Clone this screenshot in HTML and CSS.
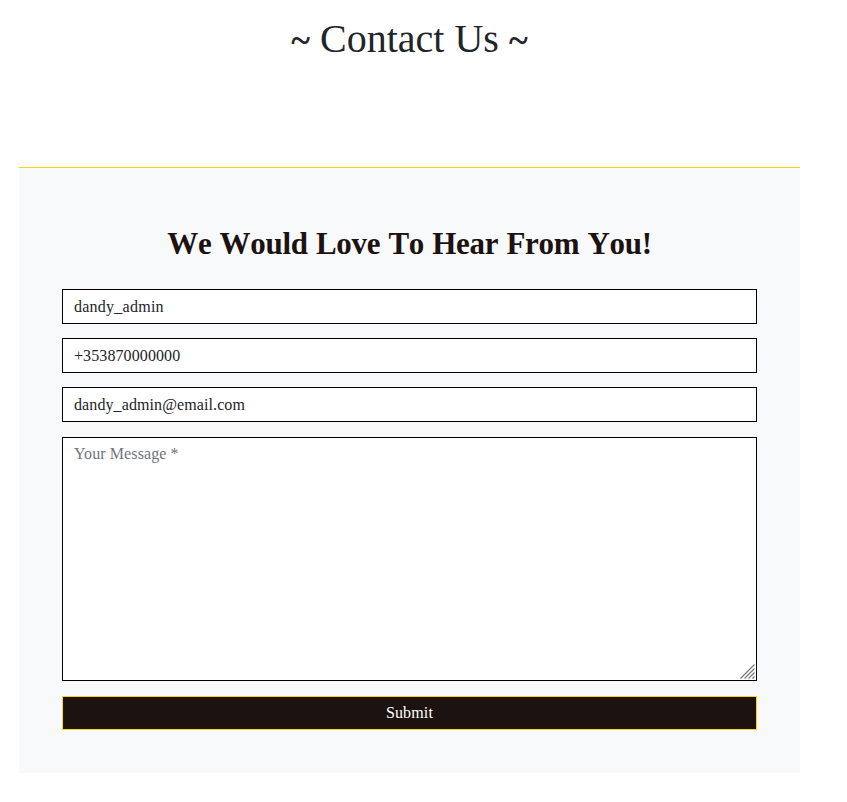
FILE: index.html
```html
<!DOCTYPE html>
<html lang="en">
<head>
<meta charset="utf-8">
<title>Contact Us</title>
<link rel="stylesheet" href="styles.css">
</head>
<body>
<main class="page">
  <h1 class="page-title"><span class="tilde">~</span> Contact Us <span class="tilde">~</span></h1>
  <section class="contact">
    <h2 class="contact-title">We Would Love To Hear From You!</h2>
    <form class="contact-form">
      <input class="field name" type="text" value="dandy_admin" spellcheck="false">
      <input class="field phone" type="text" value="+353870000000">
      <input class="field email" type="text" value="dandy_admin@email.com" spellcheck="false">
      <div class="message-wrap">
        <textarea class="field message" placeholder="Your Message *"></textarea>
        <svg class="grip" width="15" height="15" viewBox="0 0 15 15" aria-hidden="true"><path d="M.5 14.5l14-14M4.5 14.5l10-10M8.5 14.5l6-6M12.5 14.5l2-2"/></svg>
      </div>
      <button class="submit" type="button">Submit</button>
    </form>
  </section>
</main>
</body>
</html>
```
FILE: styles.css
```css
* { box-sizing: border-box; }
body {
  margin: 0;
  background: #fff;
  color: #212529;
  font-family: "Liberation Serif", serif;
  font-size: 16px;
  overflow: hidden;
}
.page { width: 781px; margin-left: 19px; padding-top: 15px; }
.page-title {
  margin: 0 0 104px;
  font-size: 40px;
  line-height: 48px;
  font-weight: 400;
  letter-spacing: 0;
  text-align: center;
}
.tilde { font-weight: 700; font-size: 36px; line-height: 1; }
.contact {
  height: 606px;
  padding: 57px 43px 43px;
  border-top: 1px solid #ffd300;
  background: #f8f9fb;
}
.contact-title {
  margin: 0 0 26px;
  font-size: 31px;
  line-height: 38px;
  font-weight: 700;
  font-kerning: none;
  letter-spacing: -0.3px;
  word-spacing: 0.8px;
  text-align: center;
  white-space: nowrap;
  color: #1c1210;
}
.contact-form { display: flex; flex-direction: column; }
.field {
  display: block;
  width: 100%;
  height: 35px;
  margin: 0 0 14px;
  padding: 5px 11px;
  border: 1px solid #000;
  border-radius: 0;
  background: #fff;
  color: #212529;
  font: 16px/24px "Liberation Serif", serif;
  letter-spacing: 0.1px;
  outline: 0;
}
.name { letter-spacing: 0.25px; }
.email { margin-bottom: 15px; }
.message-wrap { position: relative; margin-bottom: 15px; }
.message { height: 244px; margin: 0; padding-top: 4px; resize: none; }
.message::placeholder { color: #6c757d; opacity: 1; }
.grip {
  position: absolute;
  right: 2px;
  bottom: 2px;
  fill: none;
  stroke: #777;
  stroke-width: 1.2;
  pointer-events: none;
}
.submit {
  height: 34px;
  padding: 0;
  border: 1px solid #ffd300;
  background: #1c1210;
  color: #fff;
  font: 16px/24px "Liberation Serif", serif;
  letter-spacing: 0.15px;
}
```
